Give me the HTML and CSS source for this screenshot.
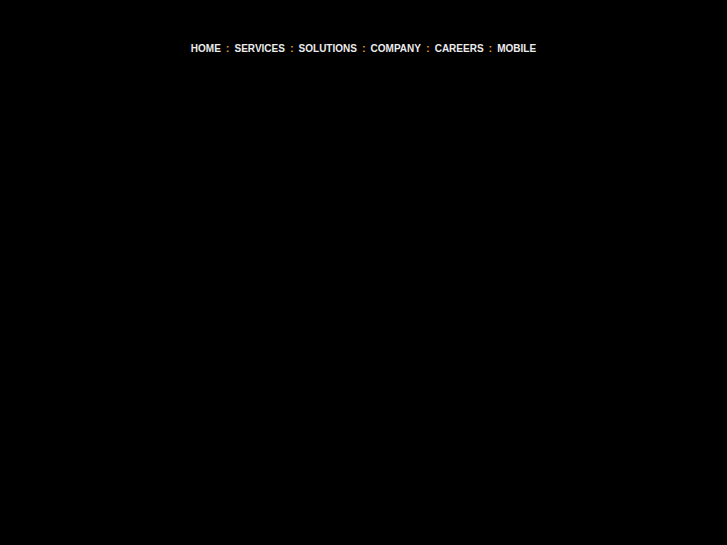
FILE: index.html
```html
<!DOCTYPE html>
<html>
<head>
<meta charset="utf-8">
<link rel="stylesheet" href="styles.css">
</head>
<body>
<div class="nav">
<a href="#">HOME</a><span class="sep">:</span><a href="#">SERVICES</a><span class="sep">:</span><a href="#">SOLUTIONS</a><span class="sep">:</span><a href="#">COMPANY</a><span class="sep">:</span><a href="#">CAREERS</a><span class="sep">:</span><a href="#">MOBILE</a>
</div>
</body>
</html>
```
FILE: styles.css
```css
html, body { margin: 0; padding: 0; background: #000; }
body { height: 545px; }
.nav {
  padding-top: 42px;
  text-align: center;
  font-family: "Liberation Sans", Arial, sans-serif;
  font-weight: bold;
  font-size: 10px;
  line-height: 12px;
  color: #ececec;
}
.nav a { color: #ececec; text-decoration: none; }
.nav .sep { color: #e8961c; margin: 0 5px; font-size: 11px; }
```
